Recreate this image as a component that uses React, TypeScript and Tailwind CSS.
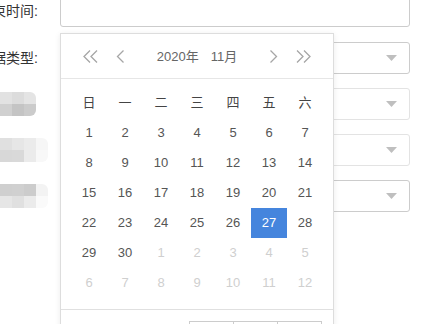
const font = { fontFamily: '"Liberation Sans", "Noto Sans CJK SC", sans-serif' };

const weekDays = ['日', '一', '二', '三', '四', '五', '六'];

// Nov 2020 starts on Sunday, then the first days of December fill the grid
const days = [
  ...Array.from({ length: 30 }, (_, i) => ({ n: i + 1, cur: true })),
  ...Array.from({ length: 12 }, (_, i) => ({ n: i + 1, cur: false })),
];

const mosaics = [
  ['#e2e2e2', '#dcdcdc', '#e4e4e4', '#d0d0d0', '#c4c4c4', '#cbcbcb'],
  ['#e0e0e0', '#e6e6e6', '#ebebeb', '#f6f6f6', '#d8d8d8', '#d9d9d9', '#ebebeb', '#f8f8f8'],
  ['#cfcfcf', '#d0d0d0', '#cccccc', '#f3f3f3', '#e6e6e6', '#e0e0e0', '#ebebeb', '#fafafa'],
];

const Arrow = () => (
  <svg width="11" height="6" viewBox="0 0 11 6" className="mr-[12px]">
    <path d="M0 0h11L5.5 6z" fill="#bfbfbf" />
  </svg>
);

const Select = ({ border }: { border: string }) => (
  <div className={`w-[350px] h-[32px] border ${border} rounded-[3px] flex items-center justify-end`}>
    <Arrow />
  </div>
);

const Mosaic = ({ cells }: { cells: string[] }) => {
  const cols = cells.length / 2;
  return (
    <div
      className={`grid ${cols === 3 ? 'grid-cols-3 w-[36px]' : 'grid-cols-4 w-[48px]'} rounded-r-[6px] overflow-hidden`}
    >
      {cells.map((c, i) => (
        <div key={i} className="h-[12px]" style={{ backgroundColor: c }} />
      ))}
    </div>
  );
};

const DoubleLeft = () => (
  <svg width="17" height="13" viewBox="0 0 17 13" fill="none" stroke="#a6a6a6" strokeWidth="1.3">
    <path d="M8 0.5L2 6.5l6 6M15 0.5L9 6.5l6 6" />
  </svg>
);

const SingleLeft = () => (
  <svg width="9" height="13" viewBox="0 0 9 13" fill="none" stroke="#a6a6a6" strokeWidth="1.3">
    <path d="M7.5 0.5L1.5 6.5l6 6" />
  </svg>
);

const App = () => {
  return (
    <div className="relative w-[443px] h-[324px] overflow-hidden bg-white text-[#333]" style={font}>
      <div className="-mt-[5px] flex flex-col gap-[14px]">
        {/* Time */}
        <div className="flex items-center">
          <div className="w-[38px] mr-[22px] flex justify-end whitespace-nowrap text-[14px]">结束时间:</div>
          <div className="w-[350px] h-[32px] border border-[#cccccc] rounded-[3px]" />
        </div>

        {/* Type */}
        <div className="flex items-center mt-[1px]">
          <div className="w-[38px] mr-[22px] flex justify-end whitespace-nowrap text-[14px]">数据类型:</div>
          <Select border="border-[#cccccc]" />
        </div>

        {mosaics.map((m, i) => (
          <div key={i} className="flex items-center">
            <div className="w-[60px] flex">
              <Mosaic cells={m} />
            </div>
            <Select border={i === 2 ? 'border-[#cccccc]' : 'border-[#e3e3e3]'} />
          </div>
        ))}
      </div>

      {/* Date picker popup */}
      <div className="absolute left-[60px] top-[33px] w-[274px] h-[330px] bg-white border border-[#dddddd] shadow-[0_1px_6px_rgba(0,0,0,0.08)]">
        <div className="h-[45px] border-b border-[#e6e6e6] flex items-center px-[19px]">
          <div className="w-[20px] flex justify-center"><DoubleLeft /></div>
          <div className="w-[20px] ml-[10px] flex justify-center"><SingleLeft /></div>
          <div className="flex-1 flex justify-center text-[13px] text-[#666] pt-[2px]">
            <span>2020年</span>
            <span className="ml-3">11月</span>
          </div>
          <div className="w-[20px] mr-[10px] flex justify-center rotate-180"><SingleLeft /></div>
          <div className="w-[20px] flex justify-center rotate-180"><DoubleLeft /></div>
        </div>

        <div className="px-[10px] pt-[9px] pb-[11px]">
          <div className="grid grid-cols-7">
            {weekDays.map((d) => (
              <div key={d} className="h-[30px] flex items-center justify-center text-[13px] text-[#444]">
                {d}
              </div>
            ))}
            {days.map((d, i) => {
              const sel = d.cur && d.n === 27;
              return (
                <div
                  key={i}
                  className={`h-[30px] flex items-center justify-center text-[13px] ${
                    sel ? 'bg-[#4585dd] text-white' : d.cur ? 'text-[#555]' : 'text-[#cfcfcf]'
                  }`}
                >
                  {d.n}
                </div>
              );
            })}
          </div>
        </div>

        {/* Footer buttons, mostly below the visible area */}
        <div className="border-t border-[#e0e0e0] flex justify-end pt-[11px] pr-[11px]">
          {[0, 1, 2].map((i) => (
            <div
              key={i}
              className={`w-[45px] h-[28px] border border-[#cccccc] ${i > 0 ? '-ml-px' : ''}`}
            />
          ))}
        </div>
      </div>
    </div>
  );
};

export default App;
